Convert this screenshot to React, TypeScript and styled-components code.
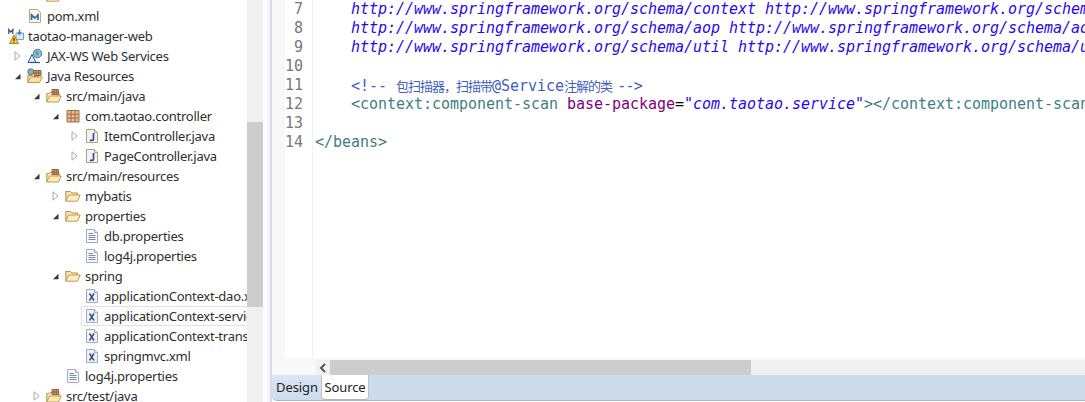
import React from "react";
import styled, { createGlobalStyle } from "styled-components";

const Global = createGlobalStyle`
  html, body { margin: 0; padding: 0; background: #fff; overflow: hidden; }
  * { box-sizing: border-box; }
`;

const Page = styled.div`
  display: flex;
  width: 1085px;
  height: 402px;
  overflow: hidden;
  background: #fff;
`;

const Sidebar = styled.div`
  width: 247px;
  height: 402px;
  overflow: hidden;
  flex: none;
`;

const Tree = styled.div`
  margin-top: -14px;
`;

const Row = styled.div<{ $depth: number; $selected?: boolean }>`
  display: flex;
  align-items: center;
  height: 20px;
  padding-left: ${(p) => (p.$depth === 0 ? 8 : 8 + (p.$depth - 1) * 19)}px;
  white-space: nowrap;
  overflow: hidden;
  position: relative;
  font: 13px "Noto Sans", "Open Sans", sans-serif;
  letter-spacing: -0.25px;
  color: #2e2e2e;
  ${(p) =>
    p.$selected
      ? `&::before { content: ""; position: absolute; left: 81px; right: 0; top: 0; bottom: 0; background: #fcfcfc; border: 1px solid #e2e2e2; border-right: 0; }`
      : ""}
`;

const ArrowSlot = styled.span`
  width: 19px;
  height: 20px;
  flex: none;
  display: flex;
  align-items: center;
  justify-content: center;
`;

const IconSlot = styled.span`
  width: 16px;
  height: 16px;
  flex: none;
  margin-right: 4px;
  display: block;
  position: relative;
  svg { display: block; }
`;

const Label = styled.span`
  flex: none;
  position: relative;
`;

const VScroll = styled.div`
  width: 16px;
  height: 402px;
  flex: none;
  background: #f0f0f0;
  padding-top: 122px;
`;

const VThumb = styled.div`
  height: 185px;
  background: #cdcdcd;
`;

const Gap = styled.div`
  width: 7px;
  flex: none;
  background: linear-gradient(90deg, #fff 0, #fff 4px, #f4f4f4 4px);
`;

const Editor = styled.div`
  flex: 1;
  min-width: 0;
  display: flex;
  flex-direction: column;
  border-left: 2px solid #d6d9ea;
  height: 402px;
`;

const CodeArea = styled.div`
  height: 360px;
  display: flex;
  flex: none;
  overflow: hidden;
  background: #f8f8f8;
`;

const Ruler = styled.div`
  width: 13px;
  flex: none;
`;

const Gutter = styled.div`
  width: 28px;
  height: 358px;
  flex: none;
  background: #fff;
  border-right: 1px solid #f2f2f2;
`;

const LineNo = styled.div`
  height: 19px;
  text-align: right;
  padding-right: 9px;
  font: 15px/19px "DejaVu Sans Mono", monospace;
  color: #787878;
`;

const Code = styled.div`
  flex: 1;
  min-width: 0;
  height: 358px;
  background: #fff;
  padding-left: 2px;
  overflow: hidden;
`;

const CodeLine = styled.div`
  height: 19px;
  font: 15px/19px "DejaVu Sans Mono", monospace;
  letter-spacing: -0.03px;
  white-space: pre;
`;

const Url = styled.span`
  color: #2a08ee;
  font-style: italic;
`;
const Tag = styled.span`
  color: #3f7f7f;
`;
const Attr = styled.span`
  color: #7f007f;
`;
const Comment = styled.span`
  color: #3f5fbf;
`;
const CommentEnd = styled(Comment)`
  margin-left: -3px;
  letter-spacing: -0.8px;
`;
const Cjk = styled.span`
  font: 13px "Noto Sans CJK SC", sans-serif;
  letter-spacing: -1px;
  color: #3f5fbf;
`;

const HScroll = styled.div`
  height: 15px;
  flex: none;
  display: flex;
  background: #f0f0f0;
`;
const HSpacer = styled.div`
  width: 44px;
  background: #f8f8f8;
  flex: none;
`;
const HButton = styled.div`
  width: 14px;
  flex: none;
  background: #f0f0f0;
  display: flex;
  align-items: center;
  justify-content: center;
`;
const HThumb = styled.div`
  width: 421px;
  flex: none;
  background: #cdcdcd;
`;

const Tabs = styled.div`
  height: 26px;
  flex: none;
  display: flex;
  background: #cddcec;
  border-bottom-left-radius: 5px;
  border-bottom: 1px solid #a9b6c6;
  font: 13px "Noto Sans", "Open Sans", sans-serif;
  letter-spacing: -0.1px;
  color: #222;
`;
const Tab = styled.div<{ $active?: boolean }>`
  width: ${(p) => (p.$active ? 46 : 50)}px;
  height: 24px;
  display: flex;
  align-items: center;
  justify-content: center;
  background: ${(p) => (p.$active ? "#fff" : "linear-gradient(180deg, #dbe6f2, #cddcec)")};
  border-bottom-left-radius: ${(p) => (p.$active ? 3 : 0)}px;
  border-bottom-right-radius: ${(p) => (p.$active ? 3 : 0)}px;
  ${(p) => (p.$active ? "box-shadow: 0 1px 0 #a9b6c6, 1px 0 0 #b5c1d0, -1px 0 0 #b5c1d0;" : "")}
`;
const BottomGap = styled.div`
  flex: 1;
  background: #fff;
`;

const Open = () => (
  <svg width="7" height="7" viewBox="0 0 7 7">
    <path d="M6.5 .8V6.2H1Z" fill="#3a3a3a" />
  </svg>
);
const Closed = () => (
  <svg width="7" height="10" viewBox="0 0 7 10">
    <path d="M1 .8L6 5L1 9.2Z" fill="#fff" stroke="#a8a8a8" strokeWidth="1" />
  </svg>
);
const JavaFile = () => (
  <svg width="16" height="16" viewBox="0 0 16 16">
    <path d="M2.5 1.5H10.5L13.5 4.5V14.5H2.5Z" fill="#f4f5f3" stroke="#ab9f88" />
    <path d="M10.5 1.5V4.5H13.5" fill="#e6e2d8" stroke="#ab9f88" />
    <path d="M9.5 5V11.2C9.5 12.6 7 12.8 6 11.8" fill="none" stroke="#2a4f98" strokeWidth="1.7" />
  </svg>
);
const XmlFile = () => (
  <svg width="16" height="16" viewBox="0 0 16 16">
    <path d="M2.5 1.5H10.5L13.5 4.5V14.5H2.5Z" fill="#eef2f8" stroke="#a3acbc" />
    <path d="M10.5 1.5V4.5H13.5" fill="#dfe5ee" stroke="#a3acbc" />
    <path d="M5.5 5.5L10 12.5M10 5.5L5.5 12.5" fill="none" stroke="#34497c" strokeWidth="1.4" />
  </svg>
);
const PomFile = () => (
  <svg width="16" height="16" viewBox="0 0 16 16">
    <path d="M2.5 1.5H10.5L13.5 4.5V14.5H2.5Z" fill="#fbf6e8" stroke="#b9a67e" />
    <path d="M4.5 12V7L7.8 10L11 7V12" fill="none" stroke="#2a6aa8" strokeWidth="1.7" />
  </svg>
);
const TextFile = () => (
  <svg width="16" height="16" viewBox="0 0 16 16">
    <path d="M2.5 1.5H10.5L13.5 4.5V14.5H2.5Z" fill="#f7f9fc" stroke="#a3acbc" />
    <path d="M10.5 1.5V4.5H13.5" fill="#e3e8f0" stroke="#a3acbc" />
    <path d="M4.5 5.5H9M4.5 7.5H11.5M4.5 9.5H11.5M4.5 11.5H11.5" stroke="#7c8ca8" />
  </svg>
);
const Folder = () => (
  <svg width="16" height="16" viewBox="0 0 16 16">
    <path d="M.8 13.2V3.5H5.5L7 5H12.5V7" fill="#f8e6b8" stroke="#b98f45" />
    <path d="M.8 13.2L3.5 7H15.2L12.5 13.2Z" fill="#fbeec9" stroke="#c29a50" />
  </svg>
);
const SourceFolder = () => (
  <svg width="16" height="16" viewBox="0 0 16 16">
    <path d="M.8 14V5.5H3L4 4.5H13V8" fill="#f8e6b8" stroke="#b98f45" />
    <path d="M.8 14L3.5 8H15.2L12.5 14Z" fill="#fbe8b8" stroke="#c29a50" />
    <path d="M6 1.5H12.5V6.5H6ZM8.2 1.5V6.5M10.3 1.5V6.5M6 4H12.5" fill="#d9a878" stroke="#8a5a3a" strokeWidth=".9" />
  </svg>
);
const Pkg = () => (
  <svg width="16" height="16" viewBox="0 0 16 16">
    <rect x="2" y="2.5" width="12" height="11.5" fill="#e3bb96" />
    <path d="M2 2.5H14V14H2ZM6 2.5V14M10 2.5V14M2 6.3H14M2 10.1H14" fill="none" stroke="#a56a44" strokeWidth="1" />
  </svg>
);
const Globe = () => (
  <svg width="16" height="16" viewBox="0 0 16 16">
    <path d="M1 14.5L5 6.5L9 14.5Z" fill="#dfe8f5" stroke="#35558f" />
    <circle cx="10.5" cy="5.5" r="4.2" fill="#8fc1e8" stroke="#3c7aa8" />
    <path d="M8 3.5L11 3L12 6L9.5 8Z" fill="#69a95a" />
    <path d="M3 14.5H13" stroke="#35558f" strokeWidth="1.2" />
  </svg>
);
const JavaRes = () => (
  <svg width="16" height="16" viewBox="0 0 16 16">
    <path d="M.8 14.5V7.5H4.5L5.5 8.5H12" fill="#f8e6b8" stroke="#b98f45" />
    <path d="M.8 14.5L3.5 9H15.2L12.5 14.5Z" fill="#fbe2a2" stroke="#c29a50" />
    <circle cx="3.8" cy="3.8" r="3" fill="#7fb7a0" stroke="#4a7d8c" />
    <path d="M7 2.5H14V7.5H7ZM9.3 2.5V7.5M11.7 2.5V7.5M7 5H14" fill="#d9a878" stroke="#8a5a3a" strokeWidth=".9" />
  </svg>
);
const ProjectIcon = () => (
  <svg width="16" height="16" viewBox="0 0 16 16">
    <path d="M8 5H15.5V11.5H8Z" fill="#dbe8f5" stroke="#7e9fc8" />
    <path d="M11.5 1.5V6" stroke="#3f79b8" strokeWidth="1.4" />
    <path d="M9.8 4.4L11.5 6.4L13.2 4.4" fill="none" stroke="#3f79b8" strokeWidth="1.2" />
    <path d="M.8 6V1.5L2.8 4L4.8 1.5V6" fill="none" stroke="#28477e" strokeWidth="1.2" />
    <path d="M1.5 15.5L6 7L10.5 15.5Z" fill="#f8c83c" stroke="#b5851c" />
    <path d="M6 10V13M6 14V14.8" stroke="#2a2a2a" strokeWidth="1.2" />
  </svg>
);

type N = {
  d: number;
  a?: "o" | "c";
  i: React.ReactNode;
  t: string;
  s?: boolean;
};

const rows: N[] = [
  { d: 2, i: <Folder />, t: "" },
  { d: 1, i: <PomFile />, t: "pom.xml" },
  { d: 0, i: <ProjectIcon />, t: "taotao-manager-web" },
  { d: 1, a: "c", i: <Globe />, t: "JAX-WS Web Services" },
  { d: 1, a: "o", i: <JavaRes />, t: "Java Resources" },
  { d: 2, a: "o", i: <SourceFolder />, t: "src/main/java" },
  { d: 3, a: "o", i: <Pkg />, t: "com.taotao.controller" },
  { d: 4, a: "c", i: <JavaFile />, t: "ItemController.java" },
  { d: 4, a: "c", i: <JavaFile />, t: "PageController.java" },
  { d: 2, a: "o", i: <SourceFolder />, t: "src/main/resources" },
  { d: 3, a: "c", i: <Folder />, t: "mybatis" },
  { d: 3, a: "o", i: <Folder />, t: "properties" },
  { d: 4, i: <TextFile />, t: "db.properties" },
  { d: 4, i: <TextFile />, t: "log4j.properties" },
  { d: 3, a: "o", i: <Folder />, t: "spring" },
  { d: 4, i: <XmlFile />, t: "applicationContext-dao.xml" },
  { d: 4, i: <XmlFile />, t: "applicationContext-service.xml", s: true },
  { d: 4, i: <XmlFile />, t: "applicationContext-transaction.xml" },
  { d: 4, i: <XmlFile />, t: "springmvc.xml" },
  { d: 3, i: <TextFile />, t: "log4j.properties" },
  { d: 2, a: "c", i: <SourceFolder />, t: "src/test/java" },
];

const base = "http://www.springframework.org/schema/";

export default function App() {
  return (
    <Page>
      <Global />
      <Sidebar>
        <Tree>
          {rows.map((r, k) => (
            <Row key={k} $depth={r.d} $selected={r.s}>
              {r.d > 0 && <ArrowSlot>{r.a === "o" ? <Open /> : r.a === "c" ? <Closed /> : null}</ArrowSlot>}
              <IconSlot>{r.i}</IconSlot>
              <Label>{r.t}</Label>
            </Row>
          ))}
        </Tree>
      </Sidebar>
      <VScroll>
        <VThumb />
      </VScroll>
      <Gap />
      <Editor>
        <CodeArea>
          <Ruler />
          <Gutter>
            {[7, 8, 9, 10, 11, 12, 13, 14].map((n) => (
              <LineNo key={n}>{n}</LineNo>
            ))}
          </Gutter>
          <Code>
            <CodeLine>
              {"    "}
              <Url>{`${base}context ${base}context/spring-context.xsd`}</Url>
            </CodeLine>
            <CodeLine>
              {"    "}
              <Url>{`${base}aop ${base}aop/spring-aop.xsd`}</Url>
            </CodeLine>
            <CodeLine>
              {"    "}
              <Url>{`${base}util ${base}util/spring-util.xsd`}</Url>
            </CodeLine>
            <CodeLine />
            <CodeLine>
              {"    "}
              <Comment>{"<!-- "}</Comment>
              <Cjk>包扫描器，扫描带</Cjk>
              <Comment>@Service</Comment>
              <Cjk>注解的类</Cjk>
              <CommentEnd>{" -->"}</CommentEnd>
            </CodeLine>
            <CodeLine>
              {"    "}
              <Tag>{"<context:component-scan "}</Tag>
              <Attr>base-package</Attr>
              {"="}
              <Url>"com.taotao.service"</Url>
              <Tag>{"></context:component-scan>"}</Tag>
            </CodeLine>
            <CodeLine />
            <CodeLine>
              <Tag>{"</beans>"}</Tag>
            </CodeLine>
          </Code>
        </CodeArea>
        <HScroll>
          <HSpacer />
          <HButton>
            <svg width="8" height="10" viewBox="0 0 8 10">
              <path d="M6 1L2 5L6 9" fill="none" stroke="#555" strokeWidth="2" />
            </svg>
          </HButton>
          <HThumb />
        </HScroll>
        <Tabs>
          <Tab>Design</Tab>
          <Tab $active>Source</Tab>
        </Tabs>
        <BottomGap />
      </Editor>
    </Page>
  );
}
